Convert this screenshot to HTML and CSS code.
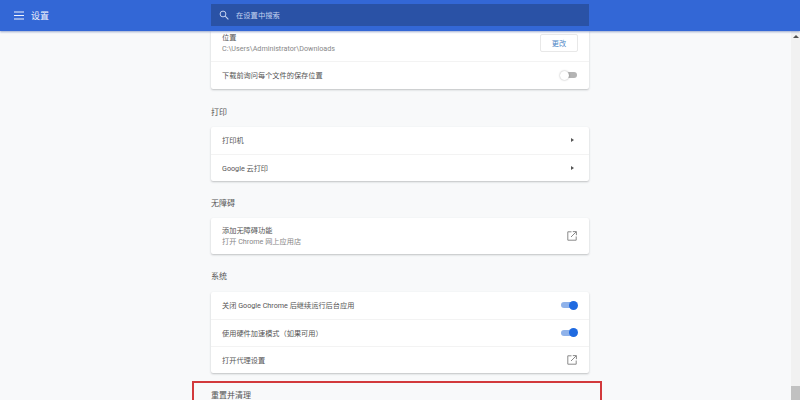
FILE: index.html
```html
<!DOCTYPE html>
<html lang="zh-CN">
<head>
<meta charset="utf-8">
<title>设置</title>
<link rel="stylesheet" href="styles.css">
</head>
<body>
<header class="topbar">
  <div class="brand">
    <svg class="menu-icon" width="11" height="9" viewBox="0 0 11 9"><path d="M0 1h10M0 4.5h10M0 8h10" stroke="#f0f4fc" stroke-width="1.1" fill="none"/></svg>
    <span class="brand-title">设置</span>
  </div>
  <div class="search">
    <svg class="search-icon" width="10" height="10" viewBox="0 0 10 10"><circle cx="4" cy="4" r="2.9" stroke="#c4d3f0" stroke-width="1" fill="none"/><path d="M6.2 6.2 9.4 9.4" stroke="#c4d3f0" stroke-width="1.1"/></svg>
    <span class="search-text">在设置中搜索</span>
  </div>
</header>
<div class="viewport">
  <main class="column">
    <section class="card card-first">
      <div class="row row-location">
        <div class="stack">
          <span>位置</span>
          <span class="sub">C:\Users\Administrator\Downloads</span>
        </div>
        <button class="change">更改</button>
      </div>
      <div class="row row-ask">
        <span>下载前询问每个文件的保存位置</span>
        <span class="toggle off"><i></i></span>
      </div>
    </section>

    <h2 class="title title-print">打印</h2>
    <section class="card">
      <div class="row"><span>打印机</span><span class="arrow"></span></div>
      <div class="row"><span>Google 云打印</span><span class="arrow"></span></div>
    </section>

    <h2 class="title title-a11y">无障碍</h2>
    <section class="card">
      <div class="row row-tall">
        <div class="stack">
          <span>添加无障碍功能</span>
          <span class="sub">打开 Chrome 网上应用店</span>
        </div>
        <svg class="ext" width="10" height="10" viewBox="0 0 10 10"><path d="M4.5 .8H.8v8.4h8.4V5.5M5.8 .6h3.6v3.6M9.2 .8 4 6" stroke="#8a8a8a" stroke-width="1" fill="none"/></svg>
      </div>
    </section>

    <h2 class="title">系统</h2>
    <section class="card">
      <div class="row"><span>关闭 Google Chrome 后继续运行后台应用</span><span class="toggle on"><i></i></span></div>
      <div class="row"><span>使用硬件加速模式（如果可用）</span><span class="toggle on"><i></i></span></div>
      <div class="row"><span>打开代理设置</span>
        <svg class="ext" width="10" height="10" viewBox="0 0 10 10"><path d="M4.5 .8H.8v8.4h8.4V5.5M5.8 .6h3.6v3.6M9.2 .8 4 6" stroke="#8a8a8a" stroke-width="1" fill="none"/></svg>
      </div>
    </section>

    <section class="reset">
      <h2 class="reset-title">重置并清理</h2>
    </section>
  </main>
  <div class="scrollbar">
    <span class="scroll-up"></span>
    <span class="scroll-thumb"></span>
  </div>
</div>
</body>
</html>
```
FILE: styles.css
```css
* { box-sizing: border-box; }
html, body { margin: 0; height: 100%; overflow: hidden; }
body {
  display: flex;
  flex-direction: column;
  background: #f8f9fa;
  color: #555;
  font-family: "Roboto", "Noto Sans CJK SC", sans-serif;
  font-size: 7.2px;
}
.topbar {
  position: relative;
  z-index: 2;
  flex: none;
  height: 31px;
  display: flex;
  align-items: center;
  background: #3367d6;
  box-shadow: 0 1px 2px rgba(40, 70, 150, .45);
}
.brand {
  width: 211px;
  display: flex;
  align-items: center;
  padding-left: 14px;
  gap: 6px;
  color: #f0f4fc;
  font-size: 9px;
}
.search {
  width: 378px;
  height: 22px;
  margin-top: -1px;
  display: flex;
  align-items: center;
  padding-left: 8px;
  gap: 7px;
  background: #2a52a6;
  color: #c4d3f0;
  font-size: 7.3px;
}
.viewport {
  flex: 1;
  min-height: 0;
  display: flex;
}
.column {
  flex: 1;
  min-width: 0;
  padding-left: 211px;
  padding-right: 202px;
  overflow: hidden;
}
.card {
  background: #fff;
  border-radius: 2px;
  box-shadow: 0 1px 2px rgba(60, 64, 67, .3);
}
.card-first { border-radius: 0 0 2px 2px; }
.row {
  height: 27px;
  display: flex;
  align-items: center;
  justify-content: space-between;
  padding: 0 11px 1px;
  border-top: 1px solid #f3f3f3;
}
.row:first-child { border-top: 0; }
.row-location { height: 30px; padding-bottom: 6px; }
.row-ask { height: 28px; }
.row-tall { height: 36px; }
.stack {
  display: flex;
  flex-direction: column;
  line-height: 11px;
}
.sub { color: #888; }
.change {
  width: 38px;
  height: 18px;
  padding: 0;
  border: 1px solid #e8e8e8;
  border-radius: 2px;
  background: #fff;
  color: #4d86c6;
  font: inherit;
}
.title, .reset-title {
  margin: 0;
  font-size: 8px;
  font-weight: 400;
  line-height: 12px;
  color: #555;
}
.title { height: 38px; padding-top: 17px; }
.title-print { padding-top: 18px; }
.title-a11y { height: 37px; }
.toggle {
  position: relative;
  width: 16px;
  height: 6px;
  margin-right: 1px;
  border-radius: 3px;
}
.toggle i {
  position: absolute;
  top: -1.5px;
  width: 9px;
  height: 9px;
  border-radius: 50%;
}
.toggle.off { background: #b4b4b4; }
.toggle.off i { left: -1px; background: #fff; box-shadow: 0 0 2px rgba(0, 0, 0, .35); }
.toggle.on { background: #8fb2ea; }
.toggle.on i { right: -1px; background: #1f6ae0; }
.arrow {
  width: 0;
  height: 0;
  margin-right: 4px;
  border-left: 3px solid #555;
  border-top: 2.5px solid transparent;
  border-bottom: 2.5px solid transparent;
}
.ext { margin-right: 1px; }
.reset {
  height: 40px;
  margin: 8px -13px 0 -19px;
  padding: 7px 0 0 17px;
  border: 2px solid #d2393c;
  border-bottom: 0;
  background: #f8f9fa;
}
.scrollbar {
  flex: none;
  width: 9px;
  display: flex;
  flex-direction: column;
  justify-content: space-between;
  align-items: center;
  background: #f1f1f1;
}
.scroll-up {
  margin-top: 4px;
  width: 0;
  height: 0;
  border-bottom: 3px solid #505050;
  border-left: 3px solid transparent;
  border-right: 3px solid transparent;
}
.scroll-thumb {
  width: 9px;
  height: 14px;
  background: #c1c1c1;
}
```
